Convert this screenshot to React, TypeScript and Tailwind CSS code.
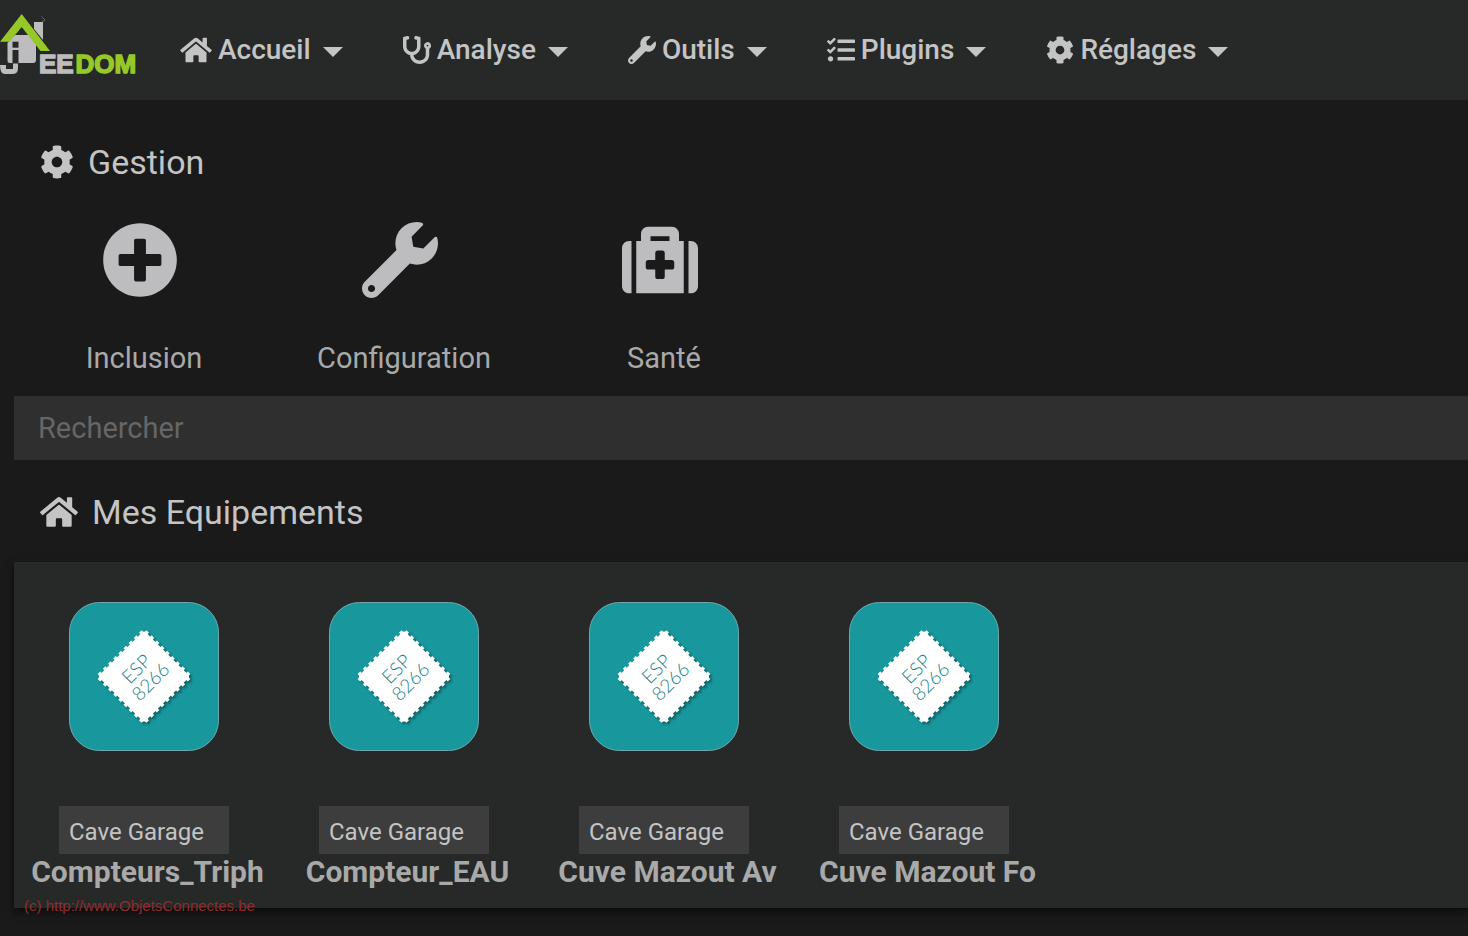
import React, { useState } from 'react'
import { FaCog, FaHome, FaMedkit, FaPlusCircle, FaStethoscope, FaTasks, FaWrench } from 'react-icons/fa'

const menus = [
    { label: "Accueil", icon: FaHome },
    { label: "Analyse", icon: FaStethoscope },
    { label: "Outils", icon: FaWrench },
    { label: "Plugins", icon: FaTasks },
    { label: "Réglages", icon: FaCog },
]

const actions = [
    { label: "Inclusion", icon: FaPlusCircle },
    { label: "Configuration", icon: FaWrench },
    { label: "Santé", icon: FaMedkit },
]

const equipments = [
    { name: "Compteurs_Triph", room: "Cave Garage" },
    { name: "Compteur_EAU", room: "Cave Garage" },
    { name: "Cuve Mazout Av", room: "Cave Garage" },
    { name: "Cuve Mazout Fo", room: "Cave Garage" },
]

function Logo() {
    return (
        <svg viewBox="0 0 137 66" className="w-[137px] h-[66px]">
            <path d="M34 10h9v18l-9-11z" fill="#bdbdbf" />
            <path d="M41.500 4.500l3.500 3.500-3 2" fill="none" stroke="#666868" strokeWidth="1" />
            <path d="M15 23h14l7 9v16q0 3-3 3H18.500V38H12.500v13H10q-2.500 0-2.500-2.500V31z" fill="#bdbdbf" />
            <path d="M12.500 29.700h6v6h-6z" fill="#272928" />
            <path d="M13 51.500h5v5q0 5.500-6 5.500H5q-5 0-5-9h6v4h7z" fill="#bdbdbf" />
            <path d="M21.700 2L50 39H40.500L21.700 15 9.500 29.700H0z" fill="#96c927" />
            <text x="39" y="61" fontSize="26" fontWeight="700" fontFamily="Liberation Sans, sans-serif"
                fill="#bdbdbf" stroke="#bdbdbf" strokeWidth="1.500">EE</text>
            <text x="75.500" y="61" fontSize="26" fontWeight="700" fontFamily="Liberation Sans, sans-serif"
                fill="#96c927" stroke="#96c927" strokeWidth="1.500">DOM</text>
        </svg>
    )
}

function EspIcon() {
    return (
        <svg viewBox="0 0 150 150" className="w-[150px] h-[150px]">
            <rect x="0.500" y="0.500" width="149" height="148" rx="30" fill="#18979c" stroke="#6fa9ab" />
            <g style={{ filter: "drop-shadow(2px 2px 1px rgba(0,50,55,0.5))" }}>
                <g transform="translate(75 74.500) rotate(-45)" fill="#fff">
                    <rect x="-32.500" y="-32.500" width="65" height="65" rx="2.500" />
                    <g stroke="#fff" strokeWidth="3" strokeDasharray="3.600 3.700">
                        <path d="M-31 -33H31" />
                        <path d="M-31 33H31" />
                        <path d="M-33 -31V31" />
                        <path d="M33 -31V31" />
                    </g>
                </g>
            </g>
            <g transform="translate(75 74.500) rotate(-45)" fill="#1d7f84" textAnchor="middle"
                fontFamily="Lato, sans-serif" fontWeight="300" fontSize="19">
                <text x="0" y="-4">ESP</text>
                <text x="1" y="15">8266</text>
            </g>
        </svg>
    )
}

export default function App() {
    const [search, setSearch] = useState<string>("")

    return (
        <div className="relative min-h-screen overflow-hidden bg-[#1a1a1a] font-[Roboto,sans-serif] text-[#c4c4c4]">
            <header className="flex items-center h-[100px] bg-[#272928]">
                <a href="#" aria-label="Jeedom" className="shrink-0 pb-[10px]"><Logo /></a>
                <nav className="flex gap-[60px] ml-[43px]">
                    {menus.map(({ label, icon: Icon }) => (
                        <button key={label} className="flex items-center text-[28px] leading-10 font-medium">
                            <Icon className={label === "Accueil" ? "w-8 h-7" : "size-7"} />
                            <span className="ml-[6px]">{label}</span>
                            <svg viewBox="0 0 20 10" className="w-5 h-[10px] ml-3 mt-1" fill="currentColor">
                                <path d="M0 0h20L10 10z" />
                            </svg>
                        </button>
                    ))}
                </nav>
            </header>

            <main className="pl-[14px]">
                <h2 className="flex items-center gap-[14px] pl-[26px] pt-10 text-[34px] leading-[44px]">
                    <FaCog className="size-[34px]" />
                    Gestion
                </h2>
                <div className="flex pt-[38px]">
                    {actions.map(({ label, icon: Icon }) => (
                        <button key={label} className="flex flex-col items-center w-[260px]">
                            <Icon className="size-[76px] mr-2 text-[#bdbdbf]" />
                            <span className="mt-10 mb-[18px] text-[29px] leading-10 text-[#a9a9a9]">{label}</span>
                        </button>
                    ))}
                </div>

                <input type="text" aria-label="Rechercher" placeholder="Rechercher" value={search}
                    onChange={(e) => { setSearch(e.target.value) }}
                    className="block w-full h-16 px-6 bg-[#2f2f2f] text-[29px] placeholder:text-[#666666] outline-none" />

                <h2 className="flex items-center gap-[14px] pl-[26px] pt-[30px] pb-7 text-[34px] leading-[44px]">
                    <FaHome className="w-[38px] h-[34px]" />
                    Mes Equipements
                </h2>
                <div className="flex pt-10 pb-[18px] bg-[#272928] shadow-[0_4px_8px_rgba(0,0,0,0.6)]">
                    {equipments.map((eq) => (
                        <a key={eq.name} href="#" className="flex flex-col items-center w-[260px]">
                            <EspIcon />
                            <span className="w-[170px] h-12 mt-[54px] px-[10px] bg-[#3d3d3d] text-[24px] leading-[52px]">{eq.room}</span>
                            <span className="pl-[7px] text-[30px] leading-9 font-bold text-[#a9a9a9]">{eq.name}</span>
                        </a>
                    ))}
                </div>
            </main>

            <p className="absolute left-6 bottom-5 text-[15px] leading-5 font-[Liberation_Sans,sans-serif] text-[#8f2d2d]">
                (c) http://www.ObjetsConnectes.be
            </p>
        </div>
    )
}
